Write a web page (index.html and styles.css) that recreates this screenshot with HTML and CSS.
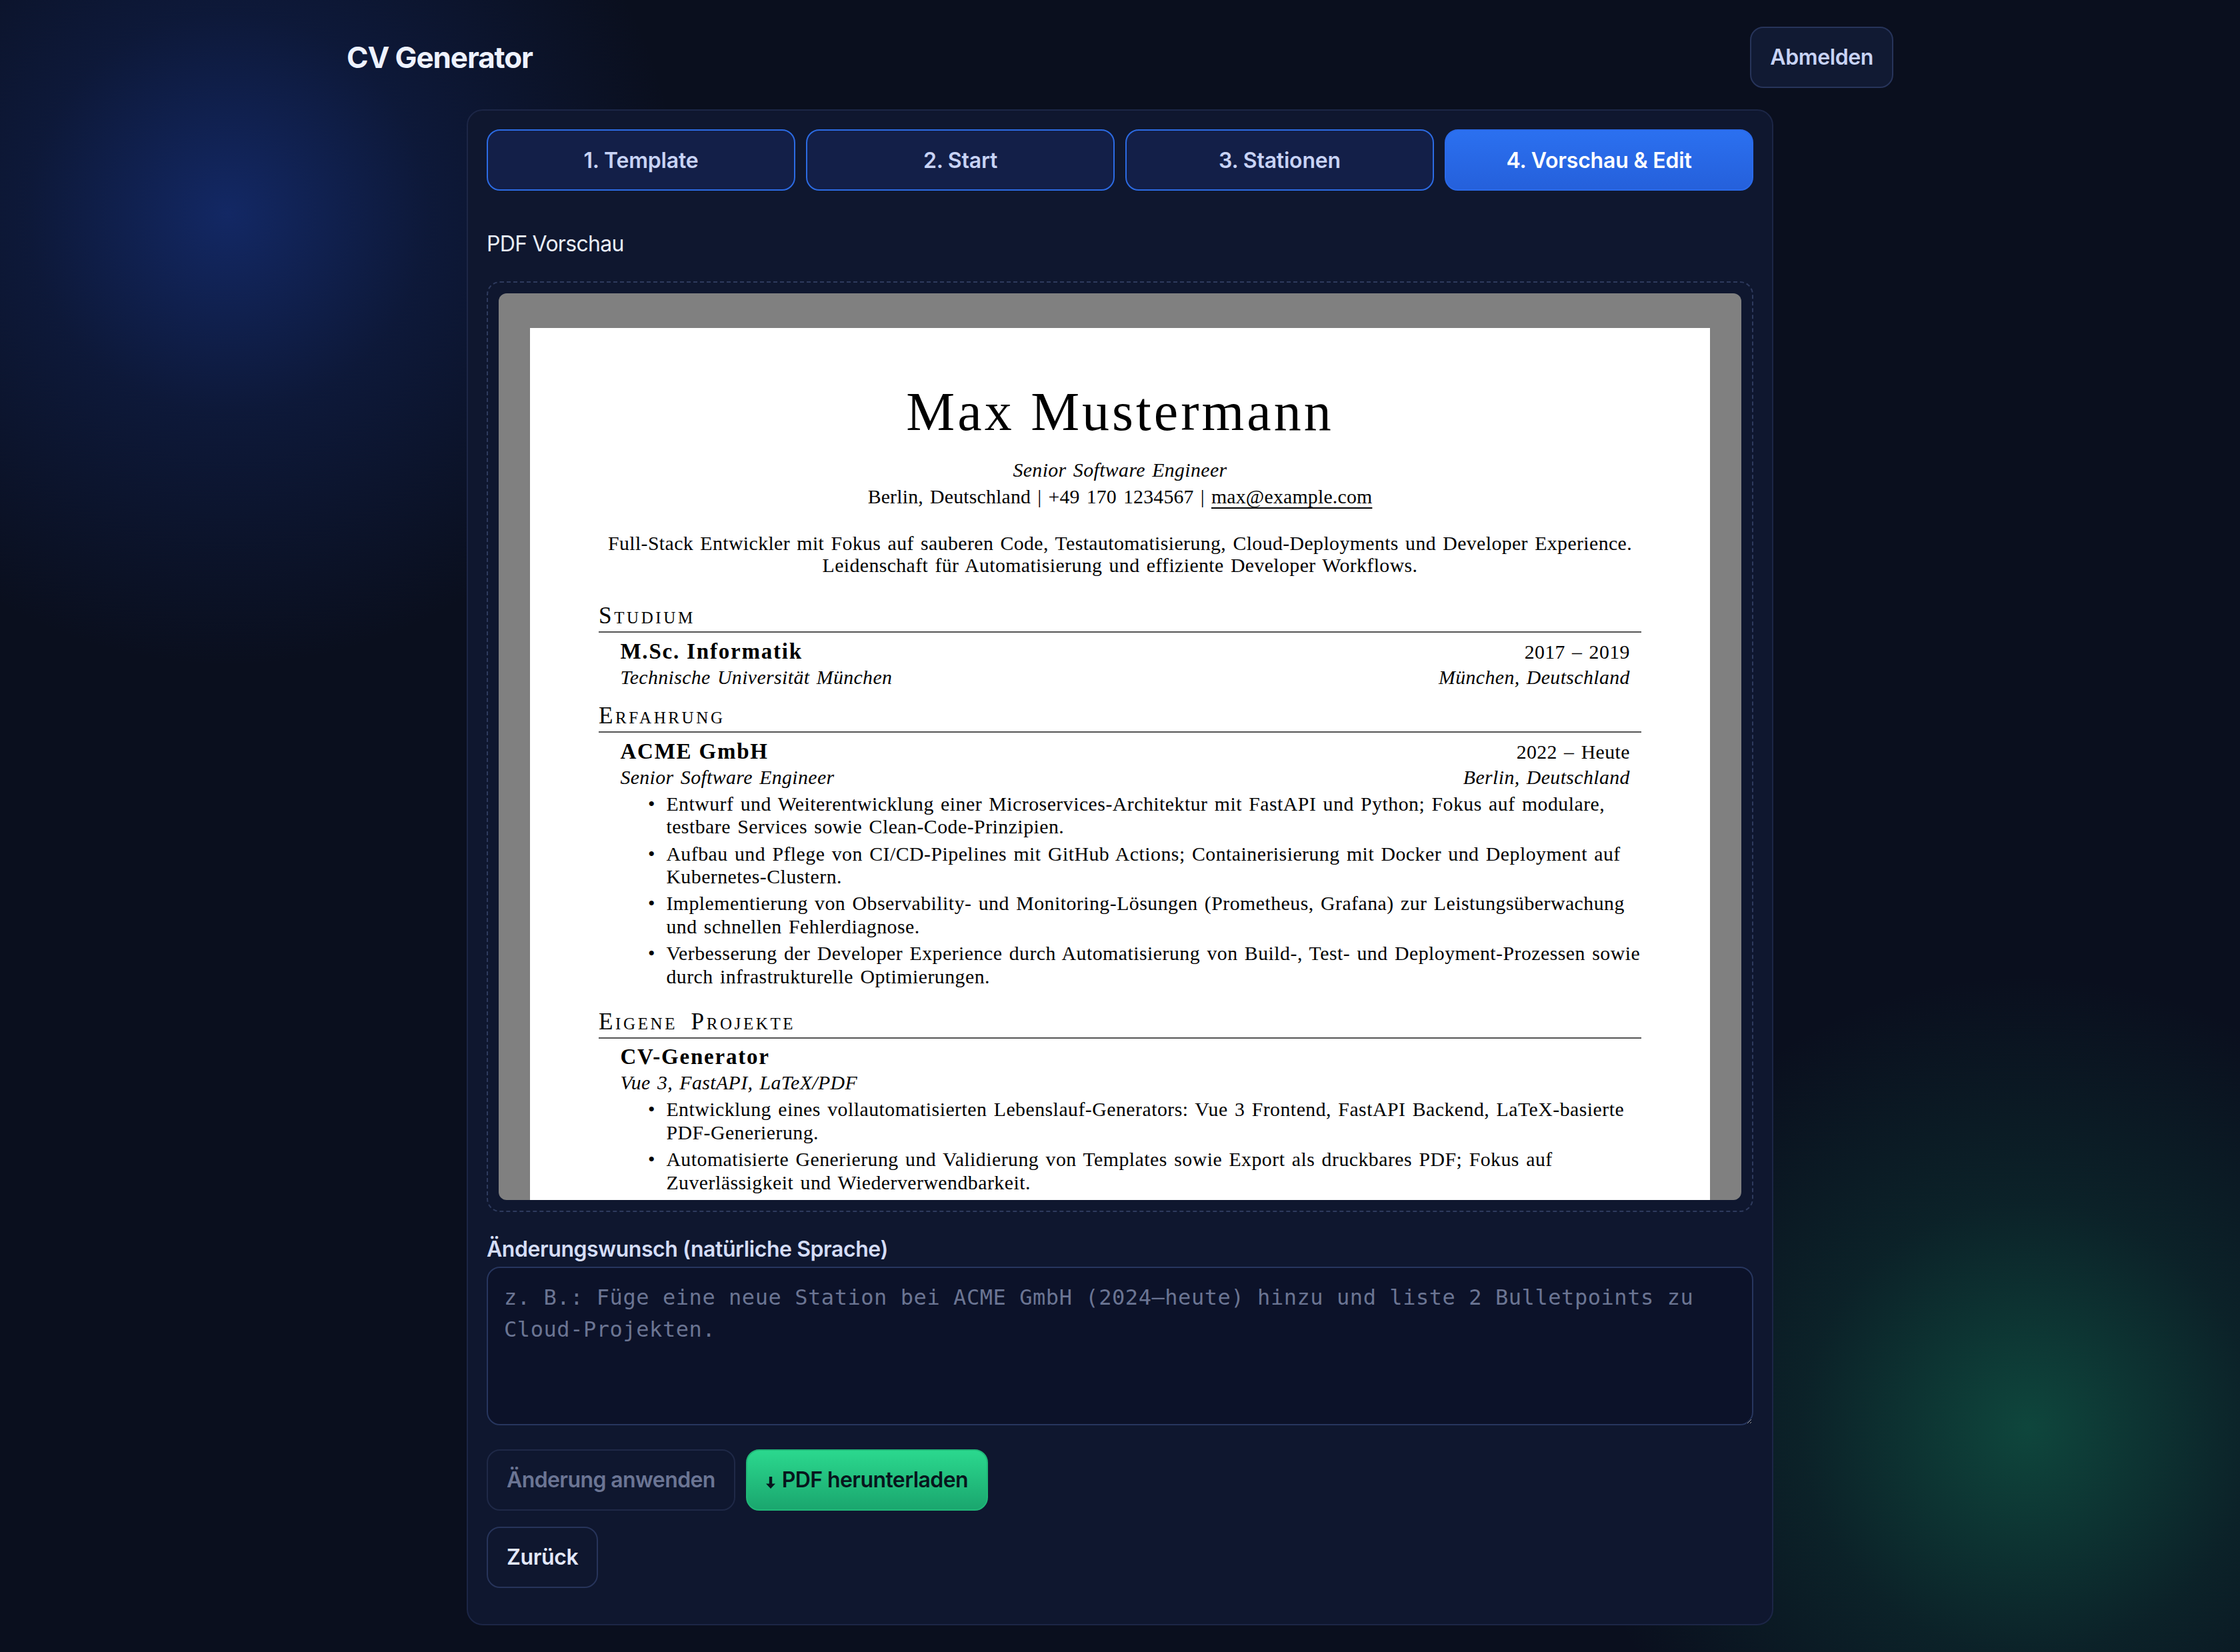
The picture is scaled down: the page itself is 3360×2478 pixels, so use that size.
FILE: index.html
```html
<!DOCTYPE html>
<html lang="de">
<head>
<meta charset="utf-8">
<title>CV Generator</title>
<link rel="stylesheet" href="styles.css">
</head>
<body>
<header class="topbar">
  <h1 class="brand">CV Generator</h1>
  <button class="btn btn-ghost" type="button">Abmelden</button>
</header>

<main class="card">
  <nav class="steps">
    <button class="step" type="button">1. Template</button>
    <button class="step" type="button">2. Start</button>
    <button class="step" type="button">3. Stationen</button>
    <button class="step active" type="button">4. Vorschau &amp; Edit</button>
  </nav>

  <div class="preview-label">PDF Vorschau</div>

  <div class="preview-frame">
    <div class="viewer">
      <article class="page">
        <h2 class="cv-name">Max Mustermann</h2>
        <div class="cv-title">Senior Software Engineer</div>
        <div class="cv-contact">Berlin, Deutschland | +49 170 1234567 | <a href="#">max@example.com</a></div>
        <p class="cv-summary">Full-Stack Entwickler mit Fokus auf sauberen Code, Testautomatisierung, Cloud-Deployments und Developer Experience.<br>Leidenschaft für Automatisierung und effiziente Developer Workflows.</p>

        <h3 class="cv-h">Studium</h3>
        <div class="entry">
          <div class="row row1"><span class="org">M.Sc. Informatik</span><span>2017 – 2019</span></div>
          <div class="row row2"><span>Technische Universität München</span><span>München, Deutschland</span></div>
        </div>

        <h3 class="cv-h">Erfahrung</h3>
        <div class="entry">
          <div class="row row1"><span class="org">ACME GmbH</span><span>2022 – Heute</span></div>
          <div class="row row2"><span>Senior Software Engineer</span><span>Berlin, Deutschland</span></div>
          <ul class="items">
            <li><span>Entwurf und Weiterentwicklung einer Microservices-Architektur mit FastAPI und Python; Fokus auf modulare,<br>testbare Services sowie Clean-Code-Prinzipien.</span></li>
            <li><span>Aufbau und Pflege von CI/CD-Pipelines mit GitHub Actions; Containerisierung mit Docker und Deployment auf<br>Kubernetes-Clustern.</span></li>
            <li><span>Implementierung von Observability- und Monitoring-Lösungen (Prometheus, Grafana) zur Leistungsüberwachung<br>und schnellen Fehlerdiagnose.</span></li>
            <li><span>Verbesserung der Developer Experience durch Automatisierung von Build-, Test- und Deployment-Prozessen sowie<br>durch infrastrukturelle Optimierungen.</span></li>
          </ul>
        </div>

        <h3 class="cv-h">Eigene Projekte</h3>
        <div class="entry">
          <div class="row row1"><span class="org">CV-Generator</span></div>
          <div class="row row2"><span>Vue 3, FastAPI, LaTeX/PDF</span></div>
          <ul class="items">
            <li><span>Entwicklung eines vollautomatisierten Lebenslauf-Generators: Vue 3 Frontend, FastAPI Backend, LaTeX-basierte<br>PDF-Generierung.</span></li>
            <li><span>Automatisierte Generierung und Validierung von Templates sowie Export als druckbares PDF; Fokus auf<br>Zuverlässigkeit und Wiederverwendbarkeit.</span></li>
          </ul>
        </div>
      </article>
    </div>
  </div>

  <label class="field-label" for="wish">Änderungswunsch (natürliche Sprache)</label>
  <textarea id="wish" class="wish" placeholder="z. B.: Füge eine neue Station bei ACME GmbH (2024–heute) hinzu und liste 2 Bulletpoints zu Cloud-Projekten."></textarea>

  <div class="actions">
    <button class="btn btn-disabled" type="button" disabled>Änderung anwenden</button>
    <button class="btn btn-green" type="button"><svg class="dl-icon" viewBox="0 0 7 9" width="7" height="9" aria-hidden="true"><path d="M2.4 0H4.6V5.2H7L3.5 9L0 5.2H2.4Z" fill="currentColor"/></svg>PDF herunterladen</button>
  </div>
  <button class="btn btn-back" type="button">Zurück</button>
</main>
</body>
</html>
```

FILE: styles.css
```css
html {
  zoom: 2;
  background: #0a0f1e;
}

body {
  margin: 0;
  min-height: 1239px;
  font-family: Inter, "Noto Sans", "Liberation Sans", sans-serif;
  color: #e2e8f0;
  background:
    radial-gradient(circle at 171px 160px, rgba(30, 72, 190, 0.44), rgba(30, 72, 190, 0.17) 150px, rgba(30, 72, 190, 0) 340px),
    radial-gradient(circle at 1521px 1071px, rgba(22, 160, 110, 0.38), rgba(22, 160, 110, 0.13) 170px, rgba(22, 160, 110, 0) 340px),
    #0a0f1e;
}

/* ---------- header ---------- */
.topbar {
  width: 1160px;
  margin: 0 auto;
  padding-top: 20px;
  display: flex;
  justify-content: space-between;
  align-items: center;
}

.brand {
  margin: 0;
  font-size: 22px;
  font-weight: 700;
  line-height: 46px;
  color: #eef2ff;
  letter-spacing: -0.55px;
}

.btn {
  font-family: inherit;
  font-size: 16px;
  font-weight: 600;
  line-height: 20px;
  letter-spacing: -0.2px;
  height: 46px;
  padding: 0 14px;
  border-radius: 10px;
  cursor: pointer;
}

.btn-ghost {
  background: #111a33;
  border: 1px solid #27345a;
  color: #c8d3f5;
}

/* ---------- card ---------- */
.card {
  display: block;
  width: 980px;
  box-sizing: border-box;
  margin: 16px auto 0;
  padding: 14px 14px 27px;
  background: #0f172f;
  border: 1px solid #1c2646;
  border-radius: 12px;
}

.steps {
  display: grid;
  grid-template-columns: repeat(4, 1fr);
  gap: 8px;
  margin-bottom: 28px;
}

.step {
  height: 46px;
  border: 1px solid #2c6be3;
  border-radius: 10px;
  background: #131f48;
  color: #c8d3f5;
  font-family: inherit;
  font-size: 16px;
  font-weight: 600;
  letter-spacing: -0.1px;
}

.step.active {
  background: linear-gradient(#2b70f0, #2560db);
  border-color: #2a6aea;
  color: #ffffff;
}

.preview-label {
  font-size: 16px;
  line-height: 24px;
  letter-spacing: -0.35px;
  color: #e8edf7;
  margin-bottom: 16px;
}

.preview-frame {
  border: 1px dashed #2e3a5d;
  border-radius: 10px;
  padding: 8px;
}

.viewer {
  height: 680px;
  box-sizing: border-box;
  padding: 26px 23.5px 0;
  background: #808080;
  border-radius: 6px;
  overflow: hidden;
}

/* ---------- CV page ---------- */
.page {
  display: flex;
  flex-direction: column;
  width: 885px;
  min-height: 720px;
  box-sizing: border-box;
  margin: 0 auto;
  padding: 39px 51.5px 0;
  background: #ffffff;
  color: #000000;
  font-family: "Liberation Serif", "Times New Roman", serif;
  font-size: 14.9px;
  letter-spacing: 0.2px;
  word-spacing: 1.2px;
}

.cv-name {
  margin: 0;
  font-size: 41px;
  font-weight: 400;
  line-height: 48px;
  letter-spacing: 2px;
  word-spacing: 0;
  text-align: center;
}

.cv-title {
  margin-top: 9.5px;
  line-height: 20px;
  font-style: italic;
  text-align: center;
}

.cv-contact {
  line-height: 20px;
  letter-spacing: 0.1px;
  text-align: center;
}

.cv-contact a {
  color: inherit;
  text-decoration: underline;
  text-decoration-thickness: 1px;
  text-underline-offset: 3px;
}

.cv-summary {
  margin: 16.7px 0 10.4px;
  line-height: 16.5px;
  text-align: center;
  white-space: nowrap;
}

.cv-h {
  margin: 9.5px 0 0;
  padding-bottom: 1.5px;
  border-bottom: 1px solid #555555;
  font-size: 17.6px;
  font-weight: 400;
  font-variant: small-caps;
  line-height: 20px;
  letter-spacing: 1.8px;
  word-spacing: 4px;
}

.entry {
  padding: 0 8.6px 0 16.2px;
  margin-top: 4.2px;
}

.row {
  display: flex;
  justify-content: space-between;
  align-items: baseline;
  white-space: nowrap;
}

.row1 {
  line-height: 19.6px;
}

.row2 {
  line-height: 19.2px;
  font-style: italic;
}

.org {
  font-weight: 700;
  font-size: 16.5px;
  letter-spacing: 0.9px;
  word-spacing: 0;
}

.items {
  list-style: none;
  margin: 1.8px 0 5.7px;
  padding: 0 0 0 20.8px;
  letter-spacing: 0.24px;
}

.items li {
  display: flex;
  line-height: 17.3px;
  white-space: nowrap;
}

.items li + li {
  margin-top: 2.8px;
}

.items li::before {
  content: "•";
  flex: 0 0 13.7px;
}

/* ---------- edit area ---------- */
.field-label {
  display: block;
  margin: 18px 0 3px;
  font-size: 16px;
  font-weight: 600;
  line-height: 20px;
  letter-spacing: -0.22px;
  color: #d5ddf7;
}

.wish {
  display: block;
  width: 100%;
  height: 119px;
  box-sizing: border-box;
  margin: 0;
  padding: 10px 12px;
  border: 1px solid #27365e;
  border-radius: 10px;
  background: #0c1229;
  color: #e2e8f0;
  font-family: "DejaVu Sans Mono", "Liberation Mono", monospace;
  font-size: 16px;
  line-height: 24px;
  letter-spacing: 0.28px;
  resize: vertical;
}

.wish::placeholder {
  color: #6b7593;
  opacity: 1;
}

.actions {
  display: flex;
  gap: 8px;
  margin-top: 18px;
}

.btn-disabled {
  background: transparent;
  border: 1px solid #1f2947;
  color: #6b7594;
  letter-spacing: -0.3px;
  cursor: default;
}

.btn-green {
  display: flex;
  align-items: center;
  background: linear-gradient(#2bd88e, #1aa66e);
  border: 1px solid #20b878;
  color: #07151c;
  letter-spacing: -0.3px;
}

.dl-icon {
  flex: none;
  margin: 4px 5px 0 0;
}

.btn-back {
  display: block;
  margin-top: 12px;
  background: transparent;
  border: 1px solid #27345a;
  color: #e3e8fb;
}
```
